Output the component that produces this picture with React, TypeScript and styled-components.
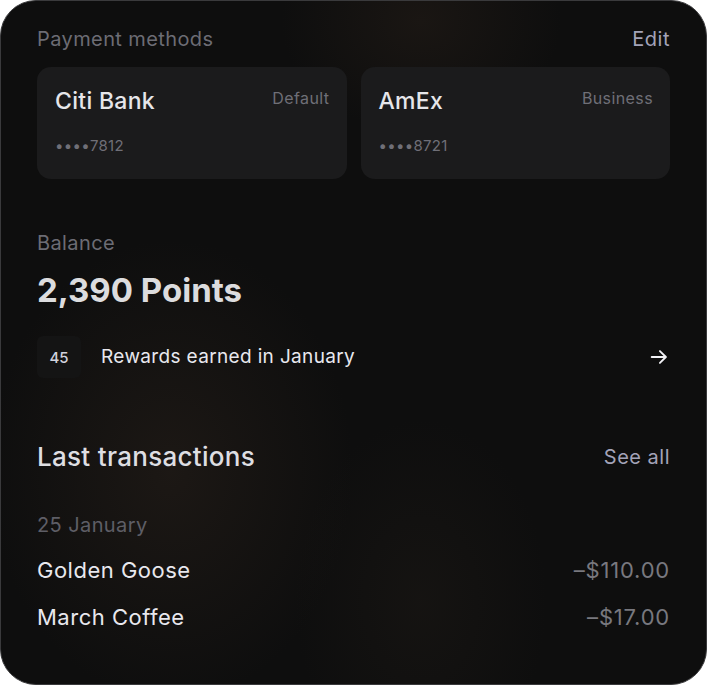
import styled, { createGlobalStyle } from "styled-components"

const Global = createGlobalStyle`
    html, body {
        margin:0;
        padding:0;
        background:#ffffff;
    }
    body {
        font-family: Inter, "Noto Sans", "Liberation Sans", sans-serif;
        -webkit-font-smoothing: antialiased;
    }
`

const Panel = styled.div`
    width:707px;
    height:685px;
    box-sizing:border-box;
    border-radius:36px;
    border:1.5px solid #3a3a3c;
    overflow:hidden;
    padding:26px 36px 0 36px;
    display:flex;
    flex-direction:column;
    background:
        radial-gradient(ellipse 260px 330px at 170px 470px, rgba(40,32,26,0.55), transparent 70%),
        radial-gradient(ellipse 200px 160px at 420px 20px, rgba(38,30,24,0.5), transparent 70%),
        radial-gradient(ellipse 180px 260px at 420px 600px, rgba(30,26,22,0.45), transparent 70%),
        #0e0e0e;
`

const Row = styled.div<{top?:number}>`
    display:flex;
    justify-content:space-between;
    align-items:center;
    margin-top:${p=>p.top ?? 0}px;
`

const Label = styled.div`
    font-size:20px;
    line-height:24px;
    color:#6c6c74;
    letter-spacing:0.4px;
`

const Link = styled.div`
    font-size:20px;
    line-height:24px;
    color:#a3a3b8;
    letter-spacing:0.5px;
    cursor:pointer;
`

const Cards = styled.div`
    display:grid;
    grid-template-columns:1fr 1fr;
    gap:14px;
    margin-top:16px;
`

const Card = styled.div`
    height:112px;
    box-sizing:border-box;
    border-radius:14px;
    background:#1b1b1c;
    padding:20px 17px 0 18px;
    display:flex;
    flex-direction:column;
`

const CardTop = styled.div`
    display:flex;
    justify-content:space-between;
    align-items:flex-start;
`

const CardName = styled.div`
    font-size:23px;
    line-height:28px;
    font-weight:500;
    color:#e6e6ea;
    letter-spacing:0.3px;
`

const CardTag = styled.div`
    font-size:16px;
    line-height:22px;
    color:#6f6f77;
    letter-spacing:0.4px;
`

const CardNumber = styled.div`
    margin-top:21px;
    font-size:15px;
    line-height:20px;
    color:#6f6f77;
    letter-spacing:0.3px;
`

const Points = styled.div`
    margin-top:15px;
    font-size:33px;
    line-height:40px;
    font-weight:700;
    color:#dcdcde;
`

const Rewards = styled.div`
    margin-top:26px;
    display:flex;
    align-items:center;
    gap:20px;
    cursor:pointer;
`

const Badge = styled.div`
    width:44px;
    height:42px;
    border-radius:6px;
    background:#141414;
    display:flex;
    align-items:center;
    justify-content:center;
    font-size:15px;
    font-weight:500;
    color:#d2d2dc;
`

const RewardText = styled.div`
    flex:1;
    font-size:19px;
    line-height:24px;
    letter-spacing:0.35px;
    color:#e8e8ee;
`

const Heading = styled.div`
    font-size:26px;
    line-height:32px;
    font-weight:500;
    letter-spacing:0.3px;
    color:#dedee2;
`

const DateLabel = styled(Label)`
    margin-top:40px;
    color:#5e5e66;
`

const Tx = styled.div`
    margin-top:19px;
    display:flex;
    justify-content:space-between;
    align-items:center;
    font-size:22px;
    line-height:28px;
    letter-spacing:0.5px;
`

const TxName = styled.span`
    color:#e8e8ee;
`

const TxAmount = styled.span`
    color:#78787f;
    letter-spacing:0.8px;
`

const Arrow = () => (
    <svg width="22" height="22" viewBox="0 0 24 24" fill="none" stroke="#f2f2f6" strokeWidth="2" strokeLinecap="round" strokeLinejoin="round">
        <path d="M4 12h15"/>
        <path d="M13 5.5l6.5 6.5-6.5 6.5"/>
    </svg>
)

const cards = [
    {name:"Citi Bank", tag:"Default", num:"7812"},
    {name:"AmEx", tag:"Business", num:"8721"},
]

const transactions = [
    {name:"Golden Goose", amount:"110.00"},
    {name:"March Coffee", amount:"17.00"},
]

const App = () => {
    return <>
        <Global/>
        <Panel>
            <Row>
                <Label>Payment methods</Label>
                <Link>Edit</Link>
            </Row>
            <Cards>
                {cards.map(c => <Card key={c.name}>
                    <CardTop>
                        <CardName>{c.name}</CardName>
                        <CardTag>{c.tag}</CardTag>
                    </CardTop>
                    <CardNumber>••••{c.num}</CardNumber>
                </Card>)}
            </Cards>
            <Row top={52}>
                <Label>Balance</Label>
            </Row>
            <Points>2,390 Points</Points>
            <Rewards>
                <Badge>45</Badge>
                <RewardText>Rewards earned in January</RewardText>
                <Arrow/>
            </Rewards>
            <Row top={63}>
                <Heading>Last transactions</Heading>
                <Link>See all</Link>
            </Row>
            <DateLabel>25 January</DateLabel>
            {transactions.map(t => <Tx key={t.name}>
                <TxName>{t.name}</TxName>
                <TxAmount>–${t.amount}</TxAmount>
            </Tx>)}
        </Panel>
    </>
}

export default App
